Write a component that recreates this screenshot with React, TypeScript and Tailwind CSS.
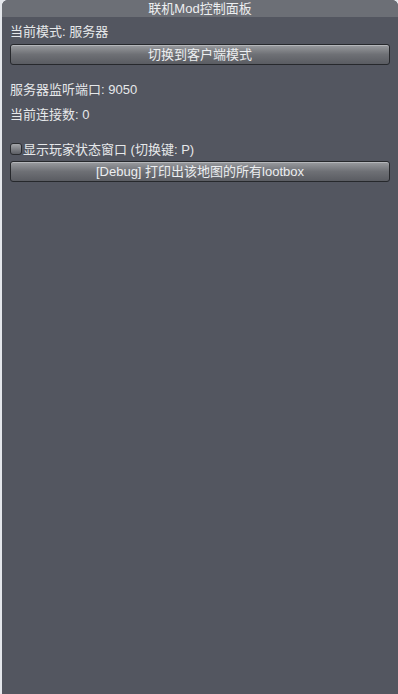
export default function App() {
  const font = { fontFamily: '"Liberation Sans", "Noto Sans CJK SC", sans-serif' };

  return (
    <div className="h-[694px] w-[398px] bg-[#e4e7ec] pl-[2px] pt-0" style={font}>
      <div className="flex h-full flex-col overflow-hidden rounded-t-[6px] bg-[#535660] text-[13px] text-[#e6e8ea]">
        {/* title bar */}
        <div className="flex h-[17px] items-center justify-center bg-[#6c6f76] text-[13px] leading-none text-[#eceef0]">
          联机Mod控制面板
        </div>

        <div className="flex flex-col px-[8px]">
          <div className="mt-[6px] h-[18px] leading-[18px]">当前模式: 服务器</div>
          <button className="mt-[3px] h-[21px] w-full rounded-[3px] border border-[#26282c] bg-gradient-to-b from-[#9a9ca0] via-[#6e7075] to-[#5a5c62] text-[13px] leading-none text-[#eceef0] shadow-[inset_0_1px_0_#b4b6ba]">
            切换到客户端模式
          </button>

          <div className="mt-[16px] h-[18px] leading-[18px]">服务器监听端口: 9050</div>
          <div className="mt-[7px] h-[18px] leading-[18px]">当前连接数: 0</div>

          <label className="mt-[18px] flex h-[14px] items-center leading-none">
            <span className="mr-[1px] h-[12px] w-[12px] rounded-[3px] border border-[#2a2c30] bg-gradient-to-b from-[#a4a6aa] to-[#5c5e64]" />
            显示玩家状态窗口 (切换键: P)
          </label>
          <button className="mt-[5px] h-[21px] w-full rounded-[3px] border border-[#26282c] bg-gradient-to-b from-[#9a9ca0] via-[#6e7075] to-[#5a5c62] text-[13px] leading-none text-[#eceef0] shadow-[inset_0_1px_0_#b4b6ba]">
            [Debug] 打印出该地图的所有lootbox
          </button>
        </div>
      </div>
    </div>
  );
}
